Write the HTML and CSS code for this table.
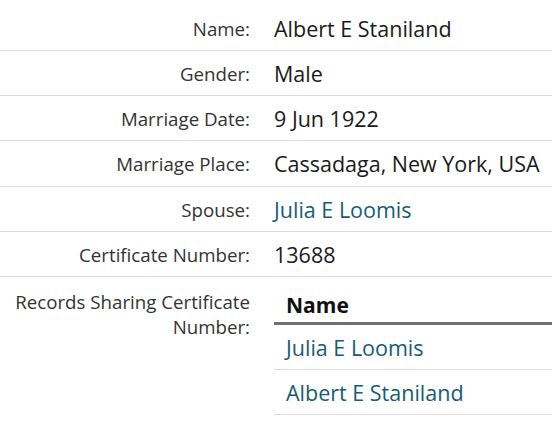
FILE: index.html
```html
<!DOCTYPE html>
<html>
<head>
<meta charset="utf-8">
<link rel="stylesheet" href="styles.css">
</head>
<body>
<table class="record">
  <tbody>
    <tr><th>Name:</th><td>Albert E Staniland</td></tr>
    <tr><th>Gender:</th><td>Male</td></tr>
    <tr><th>Marriage Date:</th><td>9 Jun 1922</td></tr>
    <tr><th>Marriage Place:</th><td>Cassadaga, New York, USA</td></tr>
    <tr><th>Spouse:</th><td><a href="#" class="link">Julia E Loomis</a></td></tr>
    <tr><th>Certificate Number:</th><td>13688</td></tr>
    <tr class="last">
      <th>Records Sharing Certificate Number:</th>
      <td class="sub-cell">
        <table class="sub">
          <thead><tr><th>Name</th></tr></thead>
          <tbody>
            <tr><td><a href="#" class="link">Julia E Loomis</a></td></tr>
            <tr><td><a href="#" class="link">Albert E Staniland</a></td></tr>
          </tbody>
        </table>
      </td>
    </tr>
  </tbody>
</table>
</body>
</html>
```
FILE: styles.css
```css
html, body {
  margin: 0;
  padding: 0;
  background: #fff;
}
body {
  padding-top: 5.8px;
  font-family: "Open Sans", "Lato", sans-serif;
  color: #222;
}
.record {
  width: 100%;
  border-collapse: collapse;
}
.record > tbody > tr > th,
.record > tbody > tr > td {
  border-bottom: 1px solid #dcdcdc;
  padding: 10px 0 9.2px;
  line-height: 25px;
  vertical-align: top;
}
.record > tbody > tr > th {
  width: 250px;
  text-align: right;
  font-weight: normal;
  font-size: 18.7px;
  color: #333;
  padding-right: 24px;
}
.record > tbody > tr > td {
  font-size: 21.5px;
  color: #1a1a1a;
}
.record > tbody > tr.last > th,
.record > tbody > tr.last > td {
  border-bottom: none;
  border-top: 1px solid #dcdcdc;
  padding-top: 12px;
}
.record > tbody > tr.last > td.sub-cell {
  padding-top: 6px;
  padding-bottom: 0;
}
.link {
  color: #175c76;
  text-decoration: none;
}
.sub {
  width: 100%;
  border-collapse: collapse;
}
.sub th {
  text-align: left;
  font-size: 21px;
  font-weight: 700;
  color: #111;
  line-height: 25px;
  padding: 10px 12px 4px;
  border-bottom: 3px solid #707070;
}
.sub td {
  line-height: 25px;
  padding: 10px 12px 9px;
  border-bottom: 1px solid #dcdcdc;
}
```
